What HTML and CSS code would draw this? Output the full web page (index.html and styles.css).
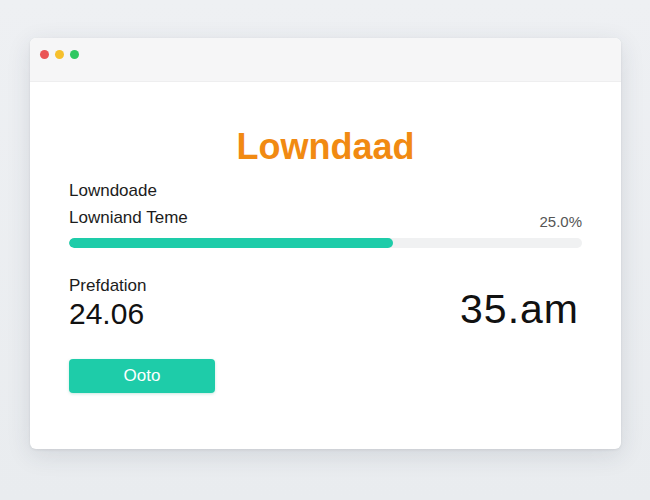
FILE: index.html
```html
<!DOCTYPE html>
<html lang="en">
<head>
  <meta charset="UTF-8" />
  <title>Lowndaad</title>
  <link rel="stylesheet" href="styles.css">
</head>
<body>

  <div class="window">
    <!-- Title bar -->
    <div class="titlebar">
      <span class="dot red"></span>
      <span class="dot yellow"></span>
      <span class="dot green"></span>
    </div>

    <!-- Content -->
    <div class="content">
      <h1 class="title">Lowndaad</h1>

      <div class="label">Lowndoade</div>
      <div class="progress-head">
        <span class="label">Lowniand Teme</span>
        <span class="percent">25.0%</span>
      </div>
      <div class="progress">
        <div class="progress-fill" style="width: 63.2%"></div>
      </div>

      <div class="stats">
        <div class="stat-left">
          <div class="label">Prefdation</div>
          <div class="value">24.06</div>
        </div>
        <div class="value-big">35.am</div>
      </div>

      <button class="btn">Ooto</button>
    </div>
  </div>

</body>
</html>
```

FILE: styles.css
```css
* { margin: 0; padding: 0; box-sizing: border-box; }
body {
  font-family: "Liberation Sans", Arial, sans-serif;
  background: linear-gradient(180deg, #eef0f3 0%, #e9ecef 100%);
  width: 650px;
  height: 500px;
  padding: 38px 29px 0 30px;
  color: #111;
}

.window {
  width: 591px;
  height: 411px;
  background-color: #fff;
  border-radius: 6px;
  overflow: hidden;
  box-shadow: 0 6px 24px rgba(40, 50, 70, 0.12), 0 1px 3px rgba(0,0,0,0.08);
}

.titlebar {
  height: 44px;
  background-color: #f6f6f7;
  border-bottom: 1px solid #eeeeef;
  display: flex;
  align-items: flex-start;
  gap: 6px;
  padding: 12px 0 0 10px;
}

.dot {
  width: 9px;
  height: 9px;
  border-radius: 50%;
}
.dot.red { background-color: #ea5455; }
.dot.yellow { background-color: #f6c02c; }
.dot.green { background-color: #2fc862; }

.content {
  padding: 0 39px;
}

.title {
  font-size: 36px;
  font-weight: bold;
  color: #f18a12;
  text-align: center;
  margin-top: 44px;
  line-height: 42px;
}

.label {
  font-size: 17px;
  color: #1c1c1c;
  line-height: 20px;
}

.content > .label { margin-top: 13px; }

.progress-head {
  display: flex;
  justify-content: space-between;
  align-items: flex-end;
  margin-top: 7px;
}

.percent {
  font-size: 15px;
  color: #555;
  margin-bottom: -2px;
}

.progress {
  margin-top: 10px;
  height: 10px;
  border-radius: 5px;
  background-color: #f0f1f2;
  overflow: hidden;
}

.progress-fill {
  height: 100%;
  border-radius: 5px;
  background-color: #1ecca9;
}

.stats {
  display: flex;
  justify-content: space-between;
  align-items: flex-end;
  margin-top: 28px;
}

.value {
  font-size: 30px;
  line-height: 34px;
  margin-top: 1px;
  color: #111;
}

.value-big {
  font-size: 41px;
  line-height: 40px;
  letter-spacing: 1px;
  color: #111;
  margin-right: 3px;
  margin-bottom: 2px;
}

.btn {
  margin-top: 28px;
  width: 146px;
  height: 34px;
  border: none;
  border-radius: 4px;
  background-color: #1ecca9;
  color: #fff;
  font-family: "Liberation Sans", Arial, sans-serif;
  font-size: 17px;
  box-shadow: 0 1px 3px rgba(30, 160, 130, 0.25);
}
```
